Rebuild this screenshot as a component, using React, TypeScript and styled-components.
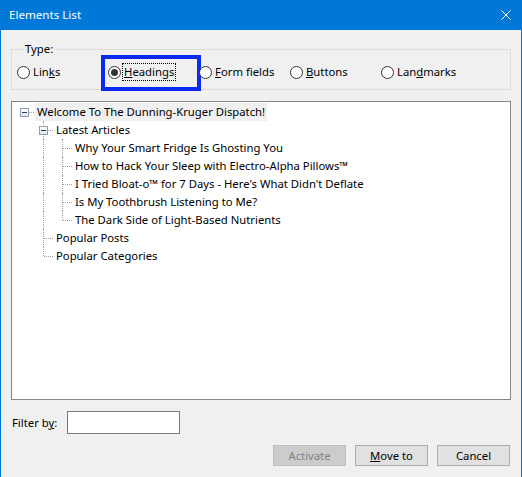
import styled, { createGlobalStyle } from 'styled-components';

const GlobalStyle = createGlobalStyle`
  html, body {
    margin: 0;
    padding: 0;
    background: #fff;
  }
  body {
    font-family: 'Noto Sans', 'Segoe UI', sans-serif;
    font-size: 11.3px;
    color: #000;
  }
`;

type TreeNode = { label: string; children?: TreeNode[] };

const tree: TreeNode = {
  label: 'Welcome To The Dunning-Kruger Dispatch!',
  children: [
    {
      label: 'Latest Articles',
      children: [
        { label: 'Why Your Smart Fridge Is Ghosting You' },
        { label: 'How to Hack Your Sleep with Electro-Alpha Pillows™' },
        { label: "I Tried Bloat-o™ for 7 Days - Here's What Didn't Deflate" },
        { label: 'Is My Toothbrush Listening to Me?' },
        { label: 'The Dark Side of Light-Based Nutrients' },
      ],
    },
    { label: 'Popular Posts' },
    { label: 'Popular Categories' },
  ],
};

type FlatRow = {
  label: string;
  depth: number;
  rails: boolean[];
  isRoot: boolean;
  isLast: boolean;
  expandable: boolean;
};

const flatten = (node: TreeNode, depth = 0, rails: boolean[] = [], isLast = true): FlatRow[] => {
  const row: FlatRow = {
    label: node.label,
    depth,
    rails,
    isRoot: depth === 0,
    isLast,
    expandable: !!node.children?.length,
  };
  const kids = node.children ?? [];
  return [
    row,
    ...kids.flatMap((child, i) =>
      flatten(child, depth + 1, [...rails, depth > 0 && !isLast], i === kids.length - 1),
    ),
  ];
};

const rows = flatten(tree);

const types = [
  { pre: 'Lin', key: 'k', post: 's' },
  { pre: '', key: 'H', post: 'eadings', checked: true },
  { pre: '', key: 'F', post: 'orm fields' },
  { pre: '', key: 'B', post: 'uttons' },
  { pre: 'Lan', key: 'd', post: 'marks' },
];

const Window = styled.div`
  width: 522px;
  height: 477px;
  box-sizing: border-box;
  border-left: 1px solid #0078d7;
  border-right: 1px solid #0078d7;
  background: #f0f0f0;
  display: flex;
  flex-direction: column;
`;

const TitleBar = styled.div`
  height: 30px;
  flex-shrink: 0;
  background: #0078d7;
  color: #fff;
  display: flex;
  align-items: center;
  justify-content: space-between;
  padding: 0 10px 0 8px;
`;

const Title = styled.span`
  font-size: 11.6px;
  line-height: 16px;
`;

const Content = styled.div`
  display: flex;
  flex-direction: column;
  padding: 11px 10px 0;
`;

const Group = styled.fieldset`
  margin: 0;
  padding: 0 0 8px 5px;
  border: 1px solid #dcdcdc;
  min-inline-size: 0;
`;

const Legend = styled.legend`
  margin-left: 7px;
  padding: 0 1px;
  line-height: 16px;
`;

const RadioRow = styled.div`
  display: flex;
  margin-top: 6px;
  height: 18px;
`;

const RadioOption = styled.label`
  position: relative;
  width: 91px;
  display: flex;
  align-items: center;
  flex-shrink: 0;
`;

const RadioCircle = styled.span<{ $checked?: boolean }>`
  width: 13px;
  height: 13px;
  box-sizing: border-box;
  border-radius: 50%;
  border: 1px solid #333;
  background: #fff;
  display: flex;
  align-items: center;
  justify-content: center;
  &::after {
    content: '';
    width: 7px;
    height: 7px;
    border-radius: 50%;
    background: ${(p) => (p.$checked ? '#333' : 'transparent')};
  }
`;

const RadioText = styled.span<{ $focused?: boolean }>`
  margin-left: 1px;
  padding: 0 1px;
  line-height: 16px;
  border: 1px dotted ${(p) => (p.$focused ? '#000' : 'transparent')};
`;

const Highlight = styled.div`
  position: absolute;
  left: -7px;
  top: -8px;
  width: 100px;
  height: 36px;
  box-sizing: border-box;
  border: 4px solid #0a2af2;
  pointer-events: none;
`;

const TreeBox = styled.div`
  margin-top: 11px;
  height: 299px;
  box-sizing: border-box;
  border: 1px solid #828790;
  background: #fff;
  padding: 1px 0 0 3px;
`;

const Row = styled.div`
  display: flex;
  height: 18px;
  align-items: stretch;
`;

const Cell = styled.div<{ $up?: boolean; $down?: boolean; $branch?: boolean }>`
  position: relative;
  width: 19px;
  flex-shrink: 0;
  &::before {
    content: '';
    display: ${(p) => (p.$up || p.$down ? 'block' : 'none')};
    position: absolute;
    left: 9px;
    top: ${(p) => (p.$up ? '0' : '9px')};
    bottom: ${(p) => (p.$down ? '0' : '9px')};
    border-left: 1px dotted #a0a0a0;
  }
  &::after {
    content: '';
    display: ${(p) => (p.$branch ? 'block' : 'none')};
    position: absolute;
    left: 10px;
    right: 0;
    top: 9px;
    border-top: 1px dotted #a0a0a0;
  }
`;

const Expander = styled.span`
  position: absolute;
  z-index: 1;
  left: 5px;
  top: 5px;
  width: 9px;
  height: 9px;
  box-sizing: border-box;
  border: 1px solid #8e9bb0;
  background: linear-gradient(#ffffff, #dfe3ea);
  &::after {
    content: '';
    position: absolute;
    left: 1px;
    top: 3px;
    width: 5px;
    height: 1px;
    background: #2b3a58;
  }
`;

const Label = styled.span<{ $selected?: boolean }>`
  margin-left: 1px;
  padding: 0 2px;
  line-height: 18px;
  white-space: nowrap;
  background: ${(p) => (p.$selected ? '#f0f0f0' : 'transparent')};
`;

const FilterRow = styled.div`
  margin-top: 11px;
  height: 23px;
  display: flex;
  align-items: center;
`;

const FilterLabel = styled.label`
  width: 55px;
  padding-left: 1px;
`;

const FilterInput = styled.input`
  width: 113px;
  height: 23px;
  box-sizing: border-box;
  margin: 0;
  border: 1px solid #7a7a7a;
  background: #fff;
  outline: none;
`;

const ButtonRow = styled.div`
  margin-top: 11px;
  display: flex;
  justify-content: flex-end;
  gap: 9px;
  padding-right: 1px;
`;

const Button = styled.button`
  width: 73px;
  height: 21px;
  box-sizing: border-box;
  margin: 0;
  padding: 0;
  font: inherit;
  color: #000;
  background: #e1e1e1;
  border: 1px solid #adadad;
  &:disabled {
    color: #838383;
    background: #cccccc;
    border-color: #bfbfbf;
  }
`;

const CloseIcon = () => (
  <svg width="10" height="10" viewBox="0 0 10 10">
    <path d="M0.5 0.5 L9.5 9.5 M9.5 0.5 L0.5 9.5" stroke="#fff" strokeWidth="1" />
  </svg>
);

const TreeRow = ({ row }: { row: FlatRow }) => (
  <Row>
    {row.rails.map((on, i) => (
      <Cell key={i} $up={on} $down={on} />
    ))}
    <Cell $up={!row.isRoot} $down={!row.isRoot && !row.isLast} $branch>
      {row.expandable && <Expander />}
    </Cell>
    <Label $selected={row.isRoot}>{row.label}</Label>
  </Row>
);

const App = () => (
  <>
    <GlobalStyle />
    <Window>
      <TitleBar>
        <Title>Elements List</Title>
        <CloseIcon />
      </TitleBar>
      <Content>
        <Group>
          <Legend>Type:</Legend>
          <RadioRow>
            {types.map((t) => (
              <RadioOption key={t.pre + t.key}>
                <RadioCircle $checked={t.checked} />
                <RadioText $focused={t.checked}>
                  {t.pre}
                  <u>{t.key}</u>
                  {t.post}
                </RadioText>
                {t.checked && <Highlight />}
              </RadioOption>
            ))}
          </RadioRow>
        </Group>
        <TreeBox>
          {rows.map((row) => (
            <TreeRow key={row.label} row={row} />
          ))}
        </TreeBox>
        <FilterRow>
          <FilterLabel>
            Filter b<u>y</u>:
          </FilterLabel>
          <FilterInput />
        </FilterRow>
        <ButtonRow>
          <Button disabled>Activate</Button>
          <Button>
            <u>M</u>ove to
          </Button>
          <Button>Cancel</Button>
        </ButtonRow>
      </Content>
    </Window>
  </>
);

export default App;
